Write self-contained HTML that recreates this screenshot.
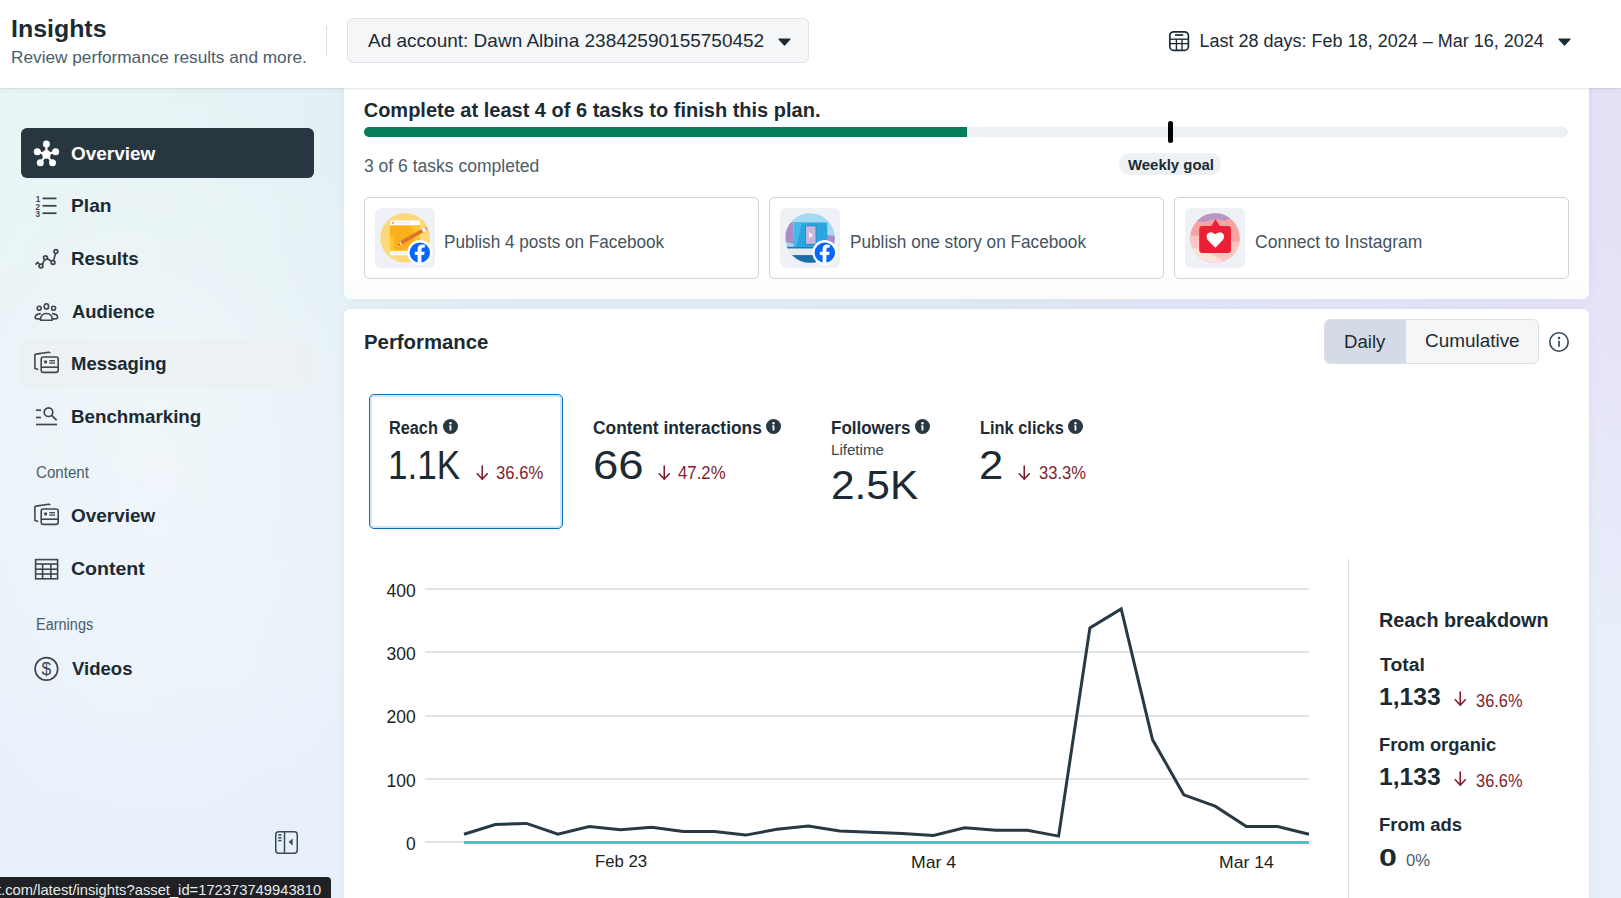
<!DOCTYPE html><html><head><meta charset="utf-8"><title>Insights</title><style>
*{margin:0;padding:0;box-sizing:border-box}
html,body{width:1621px;height:898px;overflow:hidden}
body{font-family:"Liberation Sans",sans-serif;position:relative;background:#e8f0f8;}
.bg1{position:absolute;left:0;top:0;width:1621px;height:898px;
background:linear-gradient(90deg,#e8f4f6 0%,#e4f1f4 21%,#e0ebf4 50%,#e3e4f6 78%,#e5e0f6 100%);}
.bg2{position:absolute;left:0;top:0;width:1621px;height:898px;
background:linear-gradient(180deg,rgba(233,241,251,0) 0%,rgba(233,241,251,0) 25%,rgba(233,241,251,0.8) 70%,rgba(231,239,251,1) 100%);}
.bg3{position:absolute;left:0;top:0;width:1621px;height:898px;
background:radial-gradient(ellipse 260px 420px at 160px 470px,rgba(255,255,255,0.35),rgba(255,255,255,0) 100%);}
.t{position:absolute;white-space:nowrap}
.b{position:absolute}
svg{position:absolute;overflow:visible}
</style></head><body>
<div class="bg1"></div><div class="bg2"></div><div class="bg3"></div>
<div class="b" style="left:21px;top:128px;width:293px;height:50px;background:#283640;border-radius:6px;"></div>
<div class="b" style="left:21px;top:339.5px;width:293px;height:48px;background:rgba(236,238,241,0.55);border-radius:6px;"></div>
<div class="t" style="font-size:18.5px;line-height:18.5px;top:144.84px;left:71.44px;font-weight:700;color:#ffffff;transform:scaleX(1.0247);transform-origin:0 50%;">Overview</div>
<div class="t" style="font-size:18.5px;line-height:18.5px;top:196.74px;left:70.95px;font-weight:700;color:#1c2b33;transform:scaleX(1.0375);transform-origin:0 50%;">Plan</div>
<div class="t" style="font-size:18.5px;line-height:18.5px;top:249.54px;left:70.98px;font-weight:700;color:#1c2b33;transform:scaleX(1.0132);transform-origin:0 50%;">Results</div>
<div class="t" style="font-size:18.5px;line-height:18.5px;top:302.64px;left:71.74px;font-weight:700;color:#1c2b33;transform:scaleX(0.9934);transform-origin:0 50%;">Audience</div>
<div class="t" style="font-size:18.5px;line-height:18.5px;top:355.24px;left:71.00px;font-weight:700;color:#1c2b33;">Messaging</div>
<div class="t" style="font-size:18.5px;line-height:18.5px;top:407.94px;left:70.98px;font-weight:700;color:#1c2b33;transform:scaleX(1.0137);transform-origin:0 50%;">Benchmarking</div>
<div class="t" style="font-size:18.5px;line-height:18.5px;top:506.64px;left:71.44px;font-weight:700;color:#1c2b33;transform:scaleX(1.0247);transform-origin:0 50%;">Overview</div>
<div class="t" style="font-size:18.5px;line-height:18.5px;top:559.94px;left:71.42px;font-weight:700;color:#1c2b33;transform:scaleX(1.0564);transform-origin:0 50%;">Content</div>
<div class="t" style="font-size:18.5px;line-height:18.5px;top:659.54px;left:72.11px;font-weight:700;color:#1c2b33;">Videos</div>
<div class="t" style="font-size:16px;line-height:16px;top:464.86px;left:36.04px;font-weight:400;color:#4b5d6a;transform:scaleX(0.9452);transform-origin:0 50%;">Content</div>
<div class="t" style="font-size:16px;line-height:16px;top:616.76px;left:35.64px;font-weight:400;color:#4b5d6a;transform:scaleX(0.9057);transform-origin:0 50%;">Earnings</div>
<svg style="left:34px;top:141px" width="24" height="24" viewBox="0 0 24 24"><g stroke="#fff" stroke-width="2.2" fill="#fff"><line x1="12.4" y1="13.4" x2="12.4" y2="3.1"/><line x1="12.4" y1="13.4" x2="3.3" y2="10.8"/><line x1="12.4" y1="13.4" x2="21.6" y2="10.8"/><line x1="12.4" y1="13.4" x2="6.3" y2="21.8"/><line x1="12.4" y1="13.4" x2="18.5" y2="21.8"/></g><g fill="#fff"><circle cx="12.4" cy="13.4" r="4.3"/><circle cx="12.4" cy="3.1" r="3.5"/><circle cx="3.3" cy="10.8" r="3.5"/><circle cx="21.6" cy="10.8" r="3.5"/><circle cx="6.3" cy="21.8" r="3.5"/><circle cx="18.5" cy="21.8" r="3.5"/></g></svg>
<svg style="left:34px;top:193.5px" width="24" height="24" viewBox="0 0 24 24"><g fill="#40464d" font-family="Liberation Sans" font-weight="700" font-size="8.2"><text x="1.8" y="8">1</text><text x="1.4" y="15.6">2</text><text x="1.4" y="23.2">3</text></g><g stroke="#40464d" stroke-width="1.8"><line x1="8.5" y1="4.4" x2="22.5" y2="4.4"/><line x1="8.5" y1="11.8" x2="22.5" y2="11.8"/><line x1="8.5" y1="19.2" x2="22.5" y2="19.2"/></g></svg>
<svg style="left:34px;top:246px" width="24" height="24" viewBox="0 0 24 24"><g stroke="#40464d" stroke-width="1.7" fill="none" stroke-linejoin="round"><polyline points="1.6,18.6 3.6,16.3 5.4,18"/><line x1="8.4" y1="18.6" x2="10.3" y2="14"/><line x1="12.8" y1="12.4" x2="17.3" y2="15"/><line x1="19.6" y1="14.6" x2="21.4" y2="8"/><circle cx="7" cy="20" r="1.9"/><circle cx="11.5" cy="11.8" r="1.9"/><circle cx="19" cy="16.5" r="1.9"/><circle cx="21.9" cy="5.5" r="1.9"/></g></svg>
<svg style="left:34px;top:298.5px" width="24" height="24" viewBox="0 0 24 24"><g stroke="#40464d" stroke-width="1.6" fill="none"><circle cx="5.2" cy="9.2" r="2"/><ellipse cx="12.4" cy="7.4" rx="2.2" ry="2.6"/><circle cx="19.6" cy="9.2" r="2"/><path d="M6.5 21.2 Q6.5 14.5 12.4 14.5 Q18.3 14.5 18.3 21.2 Z" stroke-linejoin="round"/><path d="M6.8 14.6 Q1.2 14.9 1.2 18.4 Q1.2 19.8 4.2 19.9 L6.5 19.9"/><path d="M18 14.6 Q23.6 14.9 23.6 18.4 Q23.6 19.8 20.6 19.9 L18.3 19.9"/></g></svg>
<svg style="left:34px;top:351px" width="24" height="24" viewBox="0 0 24 24"><g stroke="#40464d" stroke-width="1.6" fill="none"><path d="M4.2 18.6 L1 17.5 L0.8 4.5 Q0.8 3.3 2 3.1 L14.5 1.3 Q15.6 1.2 16.2 2.2"/><rect x="7.2" y="6" width="17" height="15.4" rx="2.2"/><line x1="7.2" y1="16.2" x2="24.2" y2="16.2"/></g><circle cx="11.6" cy="10.9" r="1.6" fill="#40464d"/><g stroke="#40464d" stroke-width="1.3"><line x1="15.3" y1="9.7" x2="21" y2="9.7"/><line x1="15.3" y1="12" x2="21" y2="12"/></g></svg>
<svg style="left:34px;top:403.5px" width="24" height="24" viewBox="0 0 24 24"><g stroke="#40464d" stroke-width="1.7" fill="none"><line x1="2" y1="6.2" x2="7" y2="6.2"/><line x1="2" y1="13.5" x2="7" y2="13.5"/><line x1="2" y1="20.5" x2="23" y2="20.5"/><circle cx="14.5" cy="8.2" r="4.3"/><line x1="17.6" y1="11.3" x2="22.6" y2="16.2"/></g></svg>
<svg style="left:34px;top:503px" width="24" height="24" viewBox="0 0 24 24"><g stroke="#40464d" stroke-width="1.6" fill="none"><path d="M4.2 18.6 L1 17.5 L0.8 4.5 Q0.8 3.3 2 3.1 L14.5 1.3 Q15.6 1.2 16.2 2.2"/><rect x="7.2" y="6" width="17" height="15.4" rx="2.2"/><line x1="7.2" y1="16.2" x2="24.2" y2="16.2"/></g><circle cx="11.6" cy="10.9" r="1.6" fill="#40464d"/><g stroke="#40464d" stroke-width="1.3"><line x1="15.3" y1="9.7" x2="21" y2="9.7"/><line x1="15.3" y1="12" x2="21" y2="12"/></g></svg>
<svg style="left:34px;top:556.5px" width="24" height="24" viewBox="0 0 24 24"><g stroke="#40464d" stroke-width="1.6" fill="none"><rect x="1.6" y="2.6" width="22" height="19.2"/><line x1="1.6" y1="7" x2="23.6" y2="7"/><line x1="1.6" y1="12.2" x2="23.6" y2="12.2"/><line x1="1.6" y1="17" x2="23.6" y2="17"/><line x1="8.6" y1="7" x2="8.6" y2="21.8"/><line x1="16.9" y1="7" x2="16.9" y2="21.8"/></g></svg>
<svg style="left:34px;top:656.5px" width="24" height="24" viewBox="0 0 24 24"><circle cx="12.4" cy="11.9" r="11.3" stroke="#40464d" stroke-width="1.7" fill="none"/><text x="12.4" y="18.4" text-anchor="middle" font-family="Liberation Sans" font-size="17.5" fill="#40464d">$</text></svg>
<svg style="left:275px;top:831px" width="23" height="23" viewBox="0 0 23 23"><g stroke="#3a4a55" stroke-width="1.5" fill="none"><rect x="0.75" y="0.75" width="21.5" height="21.5" rx="3"/><line x1="9.5" y1="0.75" x2="9.5" y2="22.25"/><line x1="3.2" y1="4" x2="6.5" y2="4"/><line x1="3.2" y1="6.8" x2="6.5" y2="6.8"/><line x1="3.2" y1="9.6" x2="6.5" y2="9.6"/></g><path d="M17.6 7.6 L13.6 11.1 L17.6 14.6 Z" fill="#3a4a55"/></svg>
<div class="b" style="left:0px;top:877px;width:331px;height:30px;background:#202124;border-top-right-radius:4px;"></div>
<div class="t" style="font-size:14.5px;line-height:14.5px;top:883.43px;left:-2.72px;font-weight:400;color:#e8eaed;transform:scaleX(1.0169);transform-origin:0 50%;">t.com/latest/insights?asset_id=172373749943810</div>
<div class="b" style="left:344px;top:0px;width:1245px;height:298.5px;background:linear-gradient(180deg,#fff 0%,#fff 93%,#fafbfb 100%);border-radius:6px;box-shadow:0 0 8px rgba(40,100,140,0.07);"></div>
<div class="b" style="left:344px;top:309px;width:1245px;height:700px;background:#fff;border-radius:6px;box-shadow:0 0 8px rgba(40,100,140,0.07);"></div>
<div class="t" style="font-size:20px;line-height:20px;top:100.07px;left:363.70px;font-weight:700;color:#1c2b33;">Complete at least 4 of 6 tasks to finish this plan.</div>
<div class="b" style="left:364px;top:127px;width:1204px;height:10px;background:#eef1f4;border-radius:5px;"></div>
<div class="b" style="left:364px;top:127px;width:603px;height:10px;background:#047d58;border-radius:5px 0 0 5px;"></div>
<div class="b" style="left:1167.5px;top:121px;width:5.5px;height:22px;background:#000;border-radius:3px;"></div>
<div class="t" style="font-size:18px;line-height:18px;top:156.56px;left:363.80px;font-weight:400;color:#4b5d6a;transform:scaleX(0.9736);transform-origin:0 50%;">3 of 6 tasks completed</div>
<div class="b" style="left:1119px;top:153px;width:102px;height:22px;background:#eef1f4;border-radius:11px;"></div>
<div class="t" style="font-size:15.5px;line-height:15.5px;top:157.28px;left:1128.00px;font-weight:700;color:#1c2b33;transform:scaleX(0.9629);transform-origin:0 50%;">Weekly goal</div>
<div class="b" style="left:364px;top:197px;width:395px;height:82px;border:1px solid #ccd2da;border-radius:5px;"></div>
<div class="b" style="left:375px;top:208px;width:60px;height:60px;background:#eef2f6;border-radius:6px;"></div>
<div class="t" style="font-size:17.75px;line-height:17.75px;top:233.77px;left:444.43px;font-weight:400;color:#44545f;transform:scaleX(0.9656);transform-origin:0 50%;">Publish 4 posts on Facebook</div>
<div class="b" style="left:769px;top:197px;width:395px;height:82px;border:1px solid #ccd2da;border-radius:5px;"></div>
<div class="b" style="left:780px;top:208px;width:60px;height:60px;background:#eef2f6;border-radius:6px;"></div>
<div class="t" style="font-size:17.75px;line-height:17.75px;top:233.77px;left:850.03px;font-weight:400;color:#44545f;transform:scaleX(0.9683);transform-origin:0 50%;">Publish one story on Facebook</div>
<div class="b" style="left:1174px;top:197px;width:395px;height:82px;border:1px solid #ccd2da;border-radius:5px;"></div>
<div class="b" style="left:1185px;top:208px;width:60px;height:60px;background:#eef2f6;border-radius:6px;"></div>
<div class="t" style="font-size:17.75px;line-height:17.75px;top:233.77px;left:1254.72px;font-weight:400;color:#44545f;transform:scaleX(0.9867);transform-origin:0 50%;">Connect to Instagram</div>
<svg style="left:375px;top:208px" width="60" height="60" viewBox="0 0 60 60"><circle cx="30.2" cy="29.8" r="24.8" fill="#fdd97c"/><rect x="15" y="17.5" width="30" height="25" fill="#fbb01e"/><path d="M15 30 Q20 24 19 36 Q18 42 22 42.5 L15 42.5Z" fill="#fdc72e"/><path d="M33 17.5 Q40 20 38 28 Q37 33 42 33 L45 30 L45 17.5Z" fill="#fdc72e"/><rect x="15" y="12.5" width="30" height="4.6" fill="#fff"/><circle cx="18" cy="14.8" r="1.1" fill="#f39a1b"/><rect x="21" y="14.2" width="14" height="1.2" fill="#e6e9ee"/><rect x="15" y="43.4" width="30" height="3.8" fill="#fff"/><rect x="17.5" y="44.8" width="16" height="1" fill="#e6e9ee"/><line x1="25.2" y1="35.3" x2="47.5" y2="22.6" stroke="#dd7529" stroke-width="3.8"/><line x1="47.5" y1="22.6" x2="50.2" y2="21.1" stroke="#fff" stroke-width="3.8"/><line x1="50.2" y1="21.1" x2="52.2" y2="20" stroke="#f3a0a3" stroke-width="3.8"/><path d="M25.4 33.2 L23.2 37 L27.2 36.8 Z" fill="#ffe0b0"/><path d="M24.2 35.4 L23.2 37 L25 36.9 Z" fill="#333"/><circle cx="44.8" cy="44.6" r="12.5" fill="#fff"/><circle cx="44.8" cy="44.6" r="10.2" fill="#0866ff"/><path d="M46.4 54.900000000000006 L46.4 47.0 L49.099999999999994 47.0 L49.599999999999994 43.800000000000004 L46.4 43.800000000000004 L46.4 41.800000000000004 Q46.4 39.6 48.599999999999994 39.6 L49.8 39.6 L49.8 36.7 Q48.3 36.400000000000006 47.3 36.400000000000006 Q42.599999999999994 36.400000000000006 42.599999999999994 41.300000000000004 L42.599999999999994 43.800000000000004 L39.8 43.800000000000004 L39.8 47.0 L42.599999999999994 47.0 L42.599999999999994 54.900000000000006 Z" fill="#fff"/></svg>
<svg style="left:780px;top:208px" width="60" height="60" viewBox="0 0 60 60"><defs><clipPath id="c2"><circle cx="30" cy="30" r="24.8"/></clipPath></defs><g clip-path="url(#c2)"><rect x="0" y="0" width="60" height="60" fill="#a3d9f1"/><path d="M5 16 L13 14 L14 36 L6 34Z" fill="#ab8cc9"/><path d="M47 27 L56 28 L56 37 L47 36Z" fill="#ab8cc9"/><rect x="13.8" y="14.5" width="33.4" height="24.3" fill="#2aa6dc"/><path d="M13.8 14.5 L22 14.5 L16 38.8 L13.8 38.8Z" fill="#45b8e6"/><rect x="25.5" y="17.9" width="10.5" height="18.4" fill="#c9b6de" stroke="#2b7fc1" stroke-width="0.8"/><path d="M29 24 L33 27 L29 30Z" fill="#fff"/><rect x="8" y="40.4" width="44" height="6.7" fill="#e7ecf0"/><rect x="0" y="38.8" width="60" height="1.6" fill="#1f7ab3"/><rect x="0" y="47.1" width="60" height="13" fill="#1b6fa6"/></g><circle cx="44.8" cy="44.6" r="12.5" fill="#fff"/><circle cx="44.8" cy="44.6" r="10.2" fill="#0866ff"/><path d="M46.4 54.900000000000006 L46.4 47.0 L49.099999999999994 47.0 L49.599999999999994 43.800000000000004 L46.4 43.800000000000004 L46.4 41.800000000000004 Q46.4 39.6 48.599999999999994 39.6 L49.8 39.6 L49.8 36.7 Q48.3 36.400000000000006 47.3 36.400000000000006 Q42.599999999999994 36.400000000000006 42.599999999999994 41.300000000000004 L42.599999999999994 43.800000000000004 L39.8 43.800000000000004 L39.8 47.0 L42.599999999999994 47.0 L42.599999999999994 54.900000000000006 Z" fill="#fff"/></svg>
<svg style="left:1185px;top:208px" width="60" height="60" viewBox="0 0 60 60"><defs><clipPath id="c3"><circle cx="30" cy="30" r="24.8"/></clipPath></defs><g clip-path="url(#c3)"><rect x="0" y="0" width="60" height="60" fill="#f6a4a2"/><path d="M0 0 L60 0 L60 12 Q45 8 40 13 Q30 9 20 14 Q10 12 0 15Z" fill="#b895c6"/><path d="M0 28 Q15 26 24 32 L60 34 L60 60 L0 60Z" fill="#fac6c2"/><path d="M0 38 Q20 40 36 52 L40 60 L0 60Z" fill="#fde2da"/></g><rect x="14.2" y="18" width="31.8" height="27" rx="3" fill="#ec1f37"/><path d="M25.6 19 L30.5 11.2 L35.4 19Z" fill="#ec1f37"/><path d="M30.3 39.8 L23 32.2 Q20.6 29.2 22.3 26 Q25.3 22.3 30.3 26.2 Q35.3 22.3 38.3 26 Q40 29.2 37.6 32.2 Z" fill="#fff"/></svg>
<div class="t" style="font-size:20px;line-height:20px;top:331.77px;left:363.68px;font-weight:700;color:#1c2b33;transform:scaleX(1.0175);transform-origin:0 50%;">Performance</div>
<div class="b" style="left:1324px;top:319px;width:214.5px;height:44.5px;background:#f5f6f8;border:1px solid #dcdfe4;border-radius:6px;"></div>
<div class="b" style="left:1325px;top:320px;width:80.5px;height:42.5px;background:#d5dbe6;border-radius:5px 0 0 5px;"></div>
<div class="t" style="font-size:18px;line-height:18px;top:332.66px;left:1344.21px;font-weight:400;color:#1c2b33;transform:scaleX(1.0334);transform-origin:0 50%;">Daily</div>
<div class="t" style="font-size:18.5px;line-height:18.5px;top:332.24px;left:1424.75px;font-weight:400;color:#1c2b33;transform:scaleX(1.0227);transform-origin:0 50%;">Cumulative</div>
<svg style="left:1549px;top:332px" width="20" height="20" viewBox="0 0 20 20"><circle cx="10" cy="10" r="9.2" stroke="#344854" stroke-width="1.6" fill="none"/><circle cx="10" cy="6" r="1.2" fill="#344854"/><line x1="10" y1="8.8" x2="10" y2="14.8" stroke="#344854" stroke-width="1.7"/></svg>
<div class="b" style="left:369px;top:394px;width:194px;height:135px;border:1px solid #0b6fba;box-shadow:inset 0 0 0 2px #d3e6f4;border-radius:5px;"></div>
<div class="t" style="font-size:17.5px;line-height:17.5px;top:419.89px;left:388.94px;font-weight:700;color:#1c2b33;transform:scaleX(0.9302);transform-origin:0 50%;">Reach</div>
<svg style="left:442.8px;top:419.0px" width="15" height="15" viewBox="0 0 15 15"><circle cx="7.5" cy="7.5" r="7.5" fill="#283943"/><circle cx="7.5" cy="4.2" r="1.2" fill="#fff"/><path d="M6 6.6 L8.4 6.6 L8.4 11.6 L6.6 11.6 L6.6 7.6 L6 7.6Z" fill="#fff"/></svg>
<div class="t" style="font-size:17.5px;line-height:17.5px;top:419.89px;left:592.91px;font-weight:700;color:#1c2b33;transform:scaleX(0.9923);transform-origin:0 50%;">Content interactions</div>
<svg style="left:765.9px;top:419.0px" width="15" height="15" viewBox="0 0 15 15"><circle cx="7.5" cy="7.5" r="7.5" fill="#283943"/><circle cx="7.5" cy="4.2" r="1.2" fill="#fff"/><path d="M6 6.6 L8.4 6.6 L8.4 11.6 L6.6 11.6 L6.6 7.6 L6 7.6Z" fill="#fff"/></svg>
<div class="t" style="font-size:17.5px;line-height:17.5px;top:419.89px;left:830.90px;font-weight:700;color:#1c2b33;transform:scaleX(0.9712);transform-origin:0 50%;">Followers</div>
<svg style="left:914.9px;top:419.0px" width="15" height="15" viewBox="0 0 15 15"><circle cx="7.5" cy="7.5" r="7.5" fill="#283943"/><circle cx="7.5" cy="4.2" r="1.2" fill="#fff"/><path d="M6 6.6 L8.4 6.6 L8.4 11.6 L6.6 11.6 L6.6 7.6 L6 7.6Z" fill="#fff"/></svg>
<div class="t" style="font-size:17.5px;line-height:17.5px;top:419.89px;left:979.53px;font-weight:700;color:#1c2b33;transform:scaleX(0.9364);transform-origin:0 50%;">Link clicks</div>
<svg style="left:1068.1px;top:419.0px" width="15" height="15" viewBox="0 0 15 15"><circle cx="7.5" cy="7.5" r="7.5" fill="#283943"/><circle cx="7.5" cy="4.2" r="1.2" fill="#fff"/><path d="M6 6.6 L8.4 6.6 L8.4 11.6 L6.6 11.6 L6.6 7.6 L6 7.6Z" fill="#fff"/></svg>
<div class="t" style="font-size:40px;line-height:40px;top:445.14px;left:388.37px;font-weight:400;color:#1c2b33;transform:scaleX(0.8756);transform-origin:0 50%;">1.1K</div>
<div class="t" style="font-size:40px;line-height:40px;top:445.14px;left:592.92px;font-weight:400;color:#1c2b33;transform:scaleX(1.1397);transform-origin:0 50%;">66</div>
<div class="t" style="font-size:40px;line-height:40px;top:465.14px;left:830.88px;font-weight:400;color:#1c2b33;transform:scaleX(1.0602);transform-origin:0 50%;">2.5K</div>
<div class="t" style="font-size:40px;line-height:40px;top:445.14px;left:979.32px;font-weight:400;color:#1c2b33;transform:scaleX(1.0879);transform-origin:0 50%;">2</div>
<div class="t" style="font-size:14.5px;line-height:14.5px;top:442.73px;left:830.79px;font-weight:400;color:#344854;transform:scaleX(1.0421);transform-origin:0 50%;">Lifetime</div>
<svg style="left:475.8px;top:464.6px" width="12.5" height="15" viewBox="0 0 12.5 15"><g stroke="#7f1d2d" stroke-width="1.6" fill="none" stroke-linecap="round"><line x1="6.25" y1="1" x2="6.25" y2="14"/><polyline points="1.2,8.8 6.25,14 11.3,8.8"/></g></svg>
<div class="t" style="font-size:18px;line-height:18px;top:464.36px;left:496.33px;font-weight:400;color:#7f1d2d;transform:scaleX(0.9259);transform-origin:0 50%;">36.6%</div>
<svg style="left:657.6px;top:464.6px" width="12.5" height="15" viewBox="0 0 12.5 15"><g stroke="#7f1d2d" stroke-width="1.6" fill="none" stroke-linecap="round"><line x1="6.25" y1="1" x2="6.25" y2="14"/><polyline points="1.2,8.8 6.25,14 11.3,8.8"/></g></svg>
<div class="t" style="font-size:18px;line-height:18px;top:464.36px;left:678.06px;font-weight:400;color:#7f1d2d;transform:scaleX(0.9313);transform-origin:0 50%;">47.2%</div>
<svg style="left:1017.8px;top:464.6px" width="12.5" height="15" viewBox="0 0 12.5 15"><g stroke="#7f1d2d" stroke-width="1.6" fill="none" stroke-linecap="round"><line x1="6.25" y1="1" x2="6.25" y2="14"/><polyline points="1.2,8.8 6.25,14 11.3,8.8"/></g></svg>
<div class="t" style="font-size:18px;line-height:18px;top:464.36px;left:1038.64px;font-weight:400;color:#7f1d2d;transform:scaleX(0.9219);transform-origin:0 50%;">33.3%</div>
<div class="b" style="left:425px;top:587.8px;width:884px;height:2px;background:#e1e3e6;"></div>
<div class="t" style="font-size:17.5px;line-height:17.5px;top:582.59px;left:386.47px;font-weight:400;color:#1c1e21;">400</div>
<div class="b" style="left:425px;top:651.2px;width:884px;height:2px;background:#e1e3e6;"></div>
<div class="t" style="font-size:17.5px;line-height:17.5px;top:645.99px;left:386.48px;font-weight:400;color:#1c1e21;">300</div>
<div class="b" style="left:425px;top:714.6px;width:884px;height:2px;background:#e1e3e6;"></div>
<div class="t" style="font-size:17.5px;line-height:17.5px;top:709.39px;left:386.48px;font-weight:400;color:#1c1e21;">200</div>
<div class="b" style="left:425px;top:778.0px;width:884px;height:2px;background:#e1e3e6;"></div>
<div class="t" style="font-size:17.5px;line-height:17.5px;top:772.79px;left:386.48px;font-weight:400;color:#1c1e21;">100</div>
<div class="b" style="left:425px;top:841.4px;width:884px;height:2px;background:#e1e3e6;"></div>
<div class="t" style="font-size:17.5px;line-height:17.5px;top:836.19px;left:405.90px;font-weight:400;color:#1c1e21;">0</div>
<svg style="left:0;top:0" width="1621" height="898"><line x1="464" y1="842.5" x2="1309" y2="842.5" stroke="#3fc9c3" stroke-width="3"/><polyline points="464.0,834.2 495.3,824.6 526.6,823.4 557.9,834.2 589.2,826.5 620.5,829.7 651.8,827.2 683.1,831.6 714.4,831.6 745.7,835.1 777.0,829.3 808.3,825.9 839.6,831.0 870.9,832.2 902.1,833.5 933.4,835.4 964.7,827.8 996.0,830.3 1027.3,830.3 1058.6,836.1 1089.9,627.9 1121.2,608.9 1152.5,739.6 1183.8,794.8 1215.1,806.2 1246.4,826.5 1277.7,826.5 1309.0,834.2" fill="none" stroke="#283943" stroke-width="3" stroke-linejoin="miter"/></svg>
<div class="t" style="font-size:17px;line-height:17px;top:852.91px;left:594.96px;font-weight:400;color:#1c1e21;transform:scaleX(0.9856);transform-origin:0 50%;">Feb 23</div>
<div class="t" style="font-size:17px;line-height:17px;top:853.91px;left:911.19px;font-weight:400;color:#1c1e21;transform:scaleX(1.0393);transform-origin:0 50%;">Mar 4</div>
<div class="t" style="font-size:17px;line-height:17px;top:853.91px;left:1218.69px;font-weight:400;color:#1c1e21;transform:scaleX(1.0353);transform-origin:0 50%;">Mar 14</div>
<div class="b" style="left:1348px;top:559px;width:1px;height:400px;background:#d6dbe0;"></div>
<div class="t" style="font-size:20px;line-height:20px;top:610.27px;left:1379.21px;font-weight:700;color:#1c2b33;transform:scaleX(0.9911);transform-origin:0 50%;">Reach breakdown</div>
<div class="t" style="font-size:18px;line-height:18px;top:655.96px;left:1380.31px;font-weight:700;color:#1c2b33;transform:scaleX(1.0763);transform-origin:0 50%;">Total</div>
<div class="t" style="font-size:24px;line-height:24px;top:685.08px;left:1378.52px;font-weight:700;color:#1c2b33;transform:scaleX(1.0274);transform-origin:0 50%;">1,133</div>
<svg style="left:1454px;top:690.9px" width="12.5" height="15" viewBox="0 0 12.5 15"><g stroke="#7f1d2d" stroke-width="1.6" fill="none" stroke-linecap="round"><line x1="6.25" y1="1" x2="6.25" y2="14"/><polyline points="1.2,8.8 6.25,14 11.3,8.8"/></g></svg>
<div class="t" style="font-size:18px;line-height:18px;top:691.96px;left:1475.74px;font-weight:400;color:#7f1d2d;transform:scaleX(0.9118);transform-origin:0 50%;">36.6%</div>
<div class="t" style="font-size:18px;line-height:18px;top:735.96px;left:1379.21px;font-weight:700;color:#1c2b33;transform:scaleX(1.0184);transform-origin:0 50%;">From organic</div>
<div class="t" style="font-size:24px;line-height:24px;top:765.08px;left:1378.52px;font-weight:700;color:#1c2b33;transform:scaleX(1.0274);transform-origin:0 50%;">1,133</div>
<svg style="left:1454px;top:770.9px" width="12.5" height="15" viewBox="0 0 12.5 15"><g stroke="#7f1d2d" stroke-width="1.6" fill="none" stroke-linecap="round"><line x1="6.25" y1="1" x2="6.25" y2="14"/><polyline points="1.2,8.8 6.25,14 11.3,8.8"/></g></svg>
<div class="t" style="font-size:18px;line-height:18px;top:771.96px;left:1475.74px;font-weight:400;color:#7f1d2d;transform:scaleX(0.9118);transform-origin:0 50%;">36.6%</div>
<div class="t" style="font-size:18px;line-height:18px;top:815.66px;left:1379.20px;font-weight:700;color:#1c2b33;transform:scaleX(1.0252);transform-origin:0 50%;">From ads</div>
<div class="t" style="font-size:24px;line-height:24px;top:845.88px;left:1379.11px;font-weight:700;color:#1c2b33;transform:scaleX(1.3421);transform-origin:0 50%;">0</div>
<div class="t" style="font-size:16.25px;line-height:16.25px;top:851.94px;left:1406.33px;font-weight:400;color:#4b5d6a;transform:scaleX(1.0241);transform-origin:0 50%;">0%</div>
<div class="b" style="left:0px;top:0px;width:1621px;height:88px;background:#fff;box-shadow:0 1px 1px rgba(0,0,0,0.05),0 2px 6px rgba(0,0,0,0.035);"></div>
<div class="t" style="font-size:24.25px;line-height:24.25px;top:16.67px;left:11.18px;font-weight:700;color:#1c2b33;transform:scaleX(1.0273);transform-origin:0 50%;">Insights</div>
<div class="t" style="font-size:17px;line-height:17px;top:48.91px;left:11.12px;font-weight:400;color:#4b5d6a;transform:scaleX(1.0131);transform-origin:0 50%;">Review performance results and more.</div>
<div class="b" style="left:326px;top:26px;width:1px;height:30px;background:#dadde1;"></div>
<div class="b" style="left:347px;top:18px;width:461.5px;height:44.5px;background:#f5f6f8;border:1px solid #dfe2e6;border-radius:6px;"></div>
<div class="t" style="font-size:19px;line-height:19px;top:30.92px;left:368.00px;font-weight:400;color:#1c2b33;">Ad account: Dawn Albina 23842590155750452</div>
<svg style="left:777.5px;top:37.5px" width="13" height="8" viewBox="0 0 13 8"><path d="M1 1 L12 1 L6.5 7Z" fill="#1c2b33" stroke="#1c2b33" stroke-width="1.2" stroke-linejoin="round"/></svg>
<svg style="left:1168px;top:30px" width="22" height="22" viewBox="0 0 22 22"><g stroke="#1c2b33" fill="none"><rect x="1.8" y="1.8" width="18.6" height="18.6" rx="4" stroke-width="1.7"/><line x1="7" y1="5" x2="15.2" y2="5" stroke-width="1.7"/><g stroke-width="1.35"><line x1="1.8" y1="9.2" x2="20.4" y2="9.2"/><line x1="1.8" y1="13.6" x2="20.4" y2="13.6"/><line x1="8.4" y1="9.2" x2="8.4" y2="20.4"/><line x1="14" y1="9.2" x2="14" y2="20.4"/></g></g></svg>
<div class="t" style="font-size:18px;line-height:18px;top:31.76px;left:1199.56px;font-weight:400;color:#1c2b33;">Last 28 days: Feb 18, 2024 – Mar 16, 2024</div>
<svg style="left:1557.5px;top:37.5px" width="13" height="8" viewBox="0 0 13 8"><path d="M1 1 L12 1 L6.5 7Z" fill="#1c2b33" stroke="#1c2b33" stroke-width="1.2" stroke-linejoin="round"/></svg>
</body></html>
